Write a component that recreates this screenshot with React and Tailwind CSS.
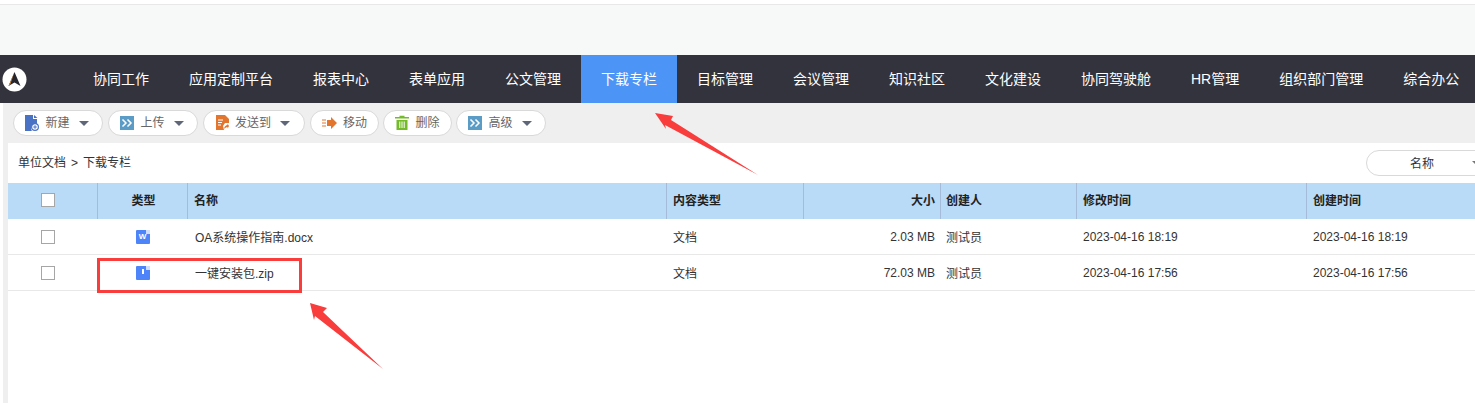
const navItems = [
  "协同工作",
  "应用定制平台",
  "报表中心",
  "表单应用",
  "公文管理",
  "下载专栏",
  "目标管理",
  "会议管理",
  "知识社区",
  "文化建设",
  "协同驾驶舱",
  "HR管理",
  "组织部门管理",
  "综合办公",
];

const NewIcon = () => (
  <svg width="14" height="16" viewBox="0 0 14 16">
    <path d="M0 0h8v4h4v5a4.500 4.500 0 0 0-5 7H0z" fill="#4a72c4" />
    <path d="M9 0l3.500 3H9z" fill="#4a72c4" />
    <circle cx="10" cy="12" r="3.400" fill="none" stroke="#4a72c4" strokeWidth="1.200" />
    <path d="M8.200 12h3.600M10 10.200v3.600" stroke="#4a72c4" strokeWidth="1" />
  </svg>
);

const ForwardIcon = () => (
  <svg width="14" height="14" viewBox="0 0 14 14">
    <rect width="14" height="14" fill="#5b9cc6" />
    <path d="M2.500 3.500L6 7l-3.500 3.500M7.500 3.500L11 7l-3.500 3.500" fill="none" stroke="#fff" strokeWidth="1.500" />
  </svg>
);

const SendIcon = () => (
  <svg width="13" height="15" viewBox="0 0 13 15">
    <path d="M0 0h9l4 4v4H9l-2 3 1 4H0z" fill="#e2762e" />
    <path d="M2 5h5M2 7.500h4M2 10h3" stroke="#fff" strokeWidth="1" />
    <path d="M8 14c.5-3 2-4 3.500-4V8.500L13 11l-1.500 2.500V12c-1.500 0-2.500 1-3.500 2z" fill="#e2762e" />
  </svg>
);

const MoveIcon = () => (
  <svg width="15" height="12" viewBox="0 0 15 12">
    <path d="M5 3h4V0l6 6-6 6V9H5z" fill="#e2762e" />
    <path d="M0 3h4M0 6h4M0 9h4" stroke="#e2762e" strokeWidth="1" />
  </svg>
);

const TrashIcon = () => (
  <svg width="14" height="15" viewBox="0 0 14 15">
    <path d="M4.500 2V.7h5V2H14v1.500H0V2z" fill="#74bb2a" />
    <path d="M1.500 5h11v10h-11z" fill="#74bb2a" />
    <path d="M4.800 6.500V13M7 6.500V13M9.200 6.500V13" stroke="#fff" strokeWidth="1" />
  </svg>
);

const Caret = () => (
  <span className="w-0 h-0 border-x-[5px] border-x-transparent border-t-[5px] border-t-[#5f6678] mt-px" />
);

const ToolButton = ({ icon, label, caret, width }) => (
  <button className={`h-[26px] ${width} shrink-0 bg-white border border-[#d9d9d9] rounded-full flex items-center justify-center gap-[6px] text-xs text-[#666] ${caret ? "pr-[2px]" : ""}`}>
    {icon}
    <span>{label}</span>
    {caret && <span className="ml-[3px] flex"><Caret /></span>}
  </button>
);

const FileIcon = ({ children }) => (
  <div className="relative w-[14px] h-[14px] bg-[#4d84fa] rounded-[1px] flex items-center justify-center">
    <span className="absolute top-0 right-0 w-[4px] h-[4px] bg-[#cfe0ff]" />
    {children}
  </div>
);

const rows = [
  {
    name: "OA系统操作指南.docx",
    type: "文档",
    size: "2.03 MB",
    owner: "测试员",
    modified: "2023-04-16 18:19",
    created: "2023-04-16 18:19",
    icon: <span className="text-[8px] leading-none font-bold text-white">W</span>,
  },
  {
    name: "一键安装包.zip",
    type: "文档",
    size: "72.03 MB",
    owner: "测试员",
    modified: "2023-04-16 17:56",
    created: "2023-04-16 17:56",
    icon: <span className="w-[2px] h-[5px] bg-white mb-[4px]" />,
  },
];

const gridCols = "grid grid-cols-[90px_90px_479px_137px_137px_136px_230px_1fr]";

const CheckBox = () => (
  <span className="block w-[14px] h-[14px] bg-white border border-[#a6a6a6]" />
);

const Arrow = ({ points }) => (
  <svg className="absolute inset-0 pointer-events-none" width="1475" height="403">
    <polygon points={points} fill="#f93c3c" />
  </svg>
);

const App = () => {
  return (
    <div className="relative w-[1475px] h-[403px] overflow-hidden bg-white font-['Liberation_Sans','Noto_Sans_CJK_SC',sans-serif]">
      <div className="h-[55px] pt-1">
        <div className="h-[51px] bg-[#f7f8f8] border-t border-[#e8e8e8]" />
      </div>

      <nav className="h-12 bg-[#33333d] flex items-center">
        <div className="w-[73px] shrink-0 pl-[2px]">
          <svg width="25" height="25" viewBox="0 0 25 25">
            <circle cx="12.500" cy="12.500" r="12" fill="#fff" />
            <path d="M12.500 5L18.500 19l-6-3.500-6 3.500z" fill="#26262e" />
            <path d="M12.500 5L6.500 19l1.500-1z" fill="#d98a3a" />
          </svg>
        </div>
        {navItems.map((item) => (
          <div
            key={item}
            className={`h-12 px-5 shrink-0 flex items-center text-sm text-white ${item === "下载专栏" ? "bg-[#4d94f7]" : ""}`}
          >
            {item}
          </div>
        ))}
      </nav>

      <div className="flex h-[300px]">
        <div className="w-[3px] shrink-0 bg-white" />
        <div className="flex-1 min-w-0 bg-[#efefef] pl-[5px]">
          <div className="h-10 flex items-center gap-[5px] pl-[5px] pb-[1px]">
            <ToolButton icon={<NewIcon />} label="新建" caret width="w-[90px]" />
            <ToolButton icon={<ForwardIcon />} label="上传" caret width="w-[90px]" />
            <ToolButton icon={<SendIcon />} label="发送到" caret width="w-[102px]" />
            <ToolButton icon={<MoveIcon />} label="移动" width="w-[69px]" />
            <div className="-ml-[1px]">
              <ToolButton icon={<TrashIcon />} label="删除" width="w-[69px]" />
            </div>
            <div className="-ml-[1px]">
              <ToolButton icon={<ForwardIcon />} label="高级" caret width="w-[90px]" />
            </div>
          </div>

          <div className="bg-white h-[260px]">
            <div className="h-10 flex items-center justify-between pl-[10px]">
              <div className="text-xs text-[#333] flex items-center">
                <span>单位文档</span>
                <span className="mx-[5px]">&gt;</span>
                <span>下载专栏</span>
              </div>
              <div className="w-[120px] h-[26px] -mr-[11px] shrink-0 border border-[#d9d9d9] rounded-l-full flex items-center text-xs text-[#333]">
                <span className="ml-[43px] mt-[1px]">名称</span>
                <span className="ml-[38px] w-0 h-0 border-x-[5px] border-x-transparent border-t-[5px] border-t-[#777]" />
              </div>
            </div>

            <div className={`${gridCols} h-9 bg-[#b9dbf7] text-xs font-bold text-[#222]`}>
              <div className="border-r border-[#a4bcd8] flex items-center justify-center pr-[10px] pb-[2px]">
                <CheckBox />
              </div>
              <div className="border-r border-[#a4bcd8] flex items-center justify-center pl-[2px]">类型</div>
              <div className="border-r border-[#a4bcd8] flex items-center pl-[6px]">名称</div>
              <div className="border-r border-[#a4bcd8] flex items-center pl-[6px]">内容类型</div>
              <div className="border-r border-[#a4bcd8] flex items-center justify-end pr-[5px]">大小</div>
              <div className="border-r border-[#a4bcd8] flex items-center pl-[5px]">创建人</div>
              <div className="border-r border-[#a4bcd8] flex items-center pl-[6px]">修改时间</div>
              <div className="flex items-center pl-[6px]">创建时间</div>
            </div>

            {rows.map((row) => (
              <div key={row.name} className={`${gridCols} h-9 border-b border-[#e8e8e8] text-xs text-[#333]`}>
                <div className="flex items-center justify-center pr-[10px]">
                  <CheckBox />
                </div>
                <div className="flex items-center justify-center pr-[1px] pt-[1px]">
                  <FileIcon>{row.icon}</FileIcon>
                </div>
                <div className="flex items-center pl-[7px] pt-[2px]">{row.name}</div>
                <div className="flex items-center pl-[6px] pt-[2px]">{row.type}</div>
                <div className="flex items-center justify-end pr-[6px]">{row.size}</div>
                <div className="flex items-center pl-[5px] pt-[2px]">{row.owner}</div>
                <div className="flex items-center pl-[6px]">{row.modified}</div>
                <div className="flex items-center pl-[6px]">{row.created}</div>
              </div>
            ))}
          </div>
        </div>
      </div>

      {/* annotations drawn over the screenshot */}
      <div className="absolute left-[97px] top-[258px] w-[205px] h-[35px] border-[3px] border-[#f93c3c]" />
      <Arrow points="655,113 673,116 671,120 758,175 665,125 666,129" />
      <Arrow points="310,303 327,308 323,312 383,369 315,316 314,320" />
    </div>
  );
};

export default App;
